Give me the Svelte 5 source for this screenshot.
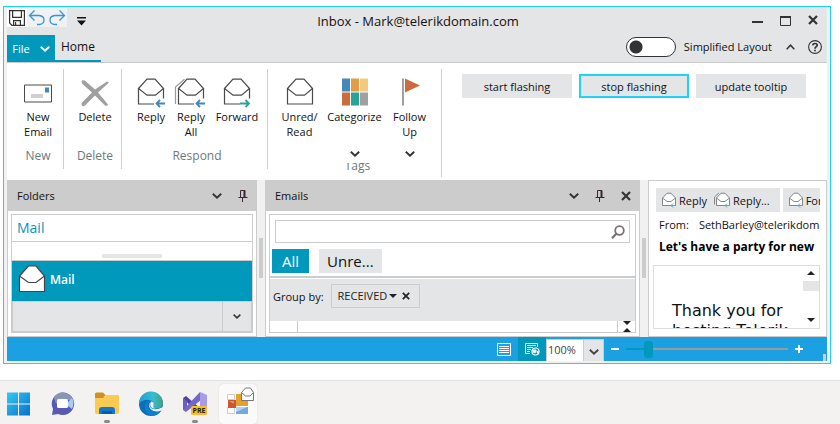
<script>
  let simplified = $state(false);
  let zoom = $state('100%');
  let level = $state(12);
  let search = $state('');
</script>

{#snippet envelope(kind)}
  <svg class="ico" viewBox="0 0 28 30" width="28" height="30" fill="none" stroke="#4a4a4c" stroke-width="1.2">
    {#if kind === 'all'}
      <path d="M-1.5 25.5V8.5L7.5.8" stroke="#9a9a9a" />
    {/if}
    <path d="M1.5 10L10 .7H18L26.5 10L18.5 16.6H10Z" />
    {#if kind === 'open'}
      <path d="M1.5 10V25.5H26.5V10" />
    {:else}
      <path d="M1.5 10V25.5H17M26.5 10V20" />
    {/if}
    {#if kind === 'reply' || kind === 'all'}
      <path d="M28 25H19.5M23 21.5L19.5 25L23 28.5" stroke="#4488bb" stroke-width="1.8" />
    {:else if kind === 'forward'}
      <path d="M17 25H26M22.5 21.5L26 25L22.5 28.5" stroke="#27a398" stroke-width="1.8" />
    {/if}
  </svg>
{/snippet}

{#snippet smallEnvelope(twin)}
  <svg class="ico" viewBox="0 0 17 16" width="17" height="16" fill="#fff" stroke="#858585">
    {#if twin}<path d="M.5 12.5V5L5 .8" fill="none" />{/if}
    <path d="M2.5 6L7 1.2H11L15.5 6V13.5H2.5Z" />
    <path d="M2.5 6L7 9.5H11L15.5 6" />
    <path d="M16 13.5H11M13 11.5L11 13.5L13 15.5" stroke="#4fa8c8" fill="none" />
  </svg>
{/snippet}

{#snippet chevron(w)}
  <svg class="ico" viewBox="0 0 10 6" width={w} height={w * 0.6} fill="none" stroke="currentColor" stroke-width="1.9"><path d="M.8 .8L5 4.8L9.2 .8" /></svg>
{/snippet}

{#snippet pin()}
  <svg class="ico" viewBox="0 0 10 12" width="10" height="12" fill="none" stroke="#3a2535"><path d="M2.5 7V.5H7M.5 7.5H9.5M4.5 7.5V12" /><path d="M6.5 .5V7" stroke-width="2" /></svg>
{/snippet}

{#snippet cross(size)}
  <svg class="ico" viewBox="0 0 10 10" width={size} height={size} fill="none" stroke="currentColor" stroke-width="2.2"><path d="M1 1L9 9M9 1L1 9" /></svg>
{/snippet}

<div class="desktop">
  <section class="window">
    <header class="titlebar">
      <div class="quick">
        <button aria-label="Save"><svg viewBox="0 0 20 20" width="20" height="20" fill="none" stroke="#333" stroke-width="1.2"><path d="M2.6 2.6H17.4V17.4H5L2.6 15ZM5.6 2.6V9.4H14.4V2.6M6.6 17V12.6H13.4V17M8.6 14V17" /></svg></button>
        <button class="tint" aria-label="Undo"><svg viewBox="0 0 20 20" width="20" height="20" fill="none" stroke="#3a96d2" stroke-width="1.3"><path d="M7.500 2.500L2.500 7.500L7.500 12.500M2.500 7.500H12Q17 8 17 12Q17 16 12.500 16.500H10" /></svg></button>
        <button class="tint" aria-label="Redo"><svg viewBox="0 0 20 20" width="20" height="20" fill="none" stroke="#3a96d2" stroke-width="1.3"><path d="M12.500 2.500L17.500 7.500L12.500 12.500M17.500 7.500H8Q3 8 3 12Q3 16 7.500 16.500H10" /></svg></button>
        <button class="more" aria-label="Customize quick access"><svg viewBox="0 0 9 9" width="9" height="9"><path d="M0 0H9V1.500H0ZM0 3.500H9L4.500 8.500Z" fill="#111" /></svg></button>
      </div>
      <h1>Inbox - Mark@telerikdomain.com</h1>
      <div class="winbtns">
        <button aria-label="Minimize"><svg viewBox="0 0 11 11" width="11" height="11"><path d="M0 6H11V8H0Z" fill="#333" /></svg></button>
        <button aria-label="Maximize"><svg viewBox="0 0 11 11" width="11" height="11" fill="none" stroke="#333"><path d="M.5 1.500H10.500V10.500H.5Z" /><path d="M0 2H11" stroke-width="2" /></svg></button>
        <button aria-label="Close">{@render cross(10)}</button>
      </div>
    </header>

    <nav class="tabs">
      <button class="file">File {@render chevron(10)}</button>
      <button class="home">Home</button>
      <div class="tabtools">
        <label><input type="checkbox" role="switch" bind:checked={simplified} /><span>Simplified Layout</span></label>
        <button class="collapse" aria-label="Collapse ribbon"><svg viewBox="0 0 9 6" width="9" height="6" fill="none" stroke="#333" stroke-width="1.5"><path d="M.7 5.200L4.500 1.200L8.300 5.200" /></svg></button>
        <button aria-label="Help"><svg viewBox="0 0 14 14" width="14" height="14" fill="none" stroke="#333"><circle cx="7" cy="7" r="6.400" stroke-width="1.100" /><path d="M4.800 5.400Q4.900 3.500 7 3.500Q9.200 3.500 9.200 5.300Q9.200 6.300 7.900 7Q7 7.500 7 8.700M7 9.700V11.200" stroke-width="1.700" /></svg></button>
      </div>
    </nav>

    <div class="ribbon">
      <div class="group new">
        <div class="cmds">
          <button class="cmd"><svg class="ico" viewBox="0 0 28 30" width="28" height="30"><path d="M.5 6.500H27.500V23.500H.5Z" fill="#fff" stroke="#4a4a4c" /><path d="M21 9H25V14H21Z" fill="#4488bb" /><path d="M7 16.500H19M7 18.500H19" stroke="#a0a0a0" /></svg>New<br />Email</button>
        </div>
        <p>New</p>
      </div>
      <div class="group delete">
        <div class="cmds">
          <button class="cmd"><svg class="ico" viewBox="0 0 28 30" width="28" height="30"><path d="M1 2Q3 1 5 3L14 11L26 3Q28 3 27.500 4.500L17 14L27 26Q27 28 24 27L14 17L4 27Q1 29 .5 26Q.5 24 3 22L11 14L1 5Q0 3 1 2Z" fill="#a0a0a0" /></svg>Delete</button>
        </div>
        <p>Delete</p>
      </div>
      <div class="group respond">
        <div class="cmds">
          <button class="cmd">{@render envelope('reply')}Reply</button>
          <button class="cmd">{@render envelope('all')}Reply<br />All</button>
          <button class="cmd wide">{@render envelope('forward')}Forward</button>
        </div>
        <p>Respond</p>
      </div>
      <div class="group tags">
        <div class="cmds">
          <button class="cmd">{@render envelope('open')}Unred/<br />Read</button>
          <button class="cmd"><svg class="ico" viewBox="0 0 28 30" width="28" height="30"><path d="M1 0H9V13H1Z" fill="#4488bb" /><path d="M10 0H18V13H10Z" fill="#e29c44" /><path d="M19 0H27V13H19Z" fill="#f2c97d" /><path d="M1 14H9V27H1Z" fill="#ca6c3d" /><path d="M10 14H18V27H10Z" fill="#27a398" /><path d="M19 14H27V27H19Z" fill="#a0a0a0" /></svg>Categorize<span class="drop">{@render chevron(10)}</span></button>
          <button class="cmd"><svg class="ico" viewBox="0 0 28 30" width="28" height="30"><path d="M6 0H8V27H6Z" fill="#a0a0a0" /><path d="M9 0L24 7L9 14Z" fill="#ca6c3d" /></svg>Follow<br />Up<span class="drop">{@render chevron(10)}</span></button>
        </div>
        <p class="cut"><span>Tags</span></p>
      </div>
      <div class="tests">
        <button>start flashing</button>
        <button class="focus">stop flashing</button>
        <button>update tooltip</button>
      </div>
    </div>

    <main>
      <section class="panel folders">
        <header><h2>Folders</h2><button aria-label="Folders menu">{@render chevron(10)}</button><button aria-label="Pin Folders">{@render pin()}</button></header>
        <div class="box">
          <h3>Mail</h3>
          <div class="grip"><i></i></div>
          <button class="mail"><svg class="ico" viewBox="0 0 28 28" width="28" height="28" fill="#fff" stroke="#454547" stroke-width="1.200"><path d="M1.500 11L10.500 1H18L26.500 11V26.500H1.500Z" /><path d="M1.500 11L10.500 17.500H18L26.500 11" fill="none" /></svg>Mail</button>
          <div class="overflow"><button aria-label="More folders">{@render chevron(8)}</button></div>
        </div>
      </section>
      <div class="splitter"><i></i></div>
      <section class="panel emails">
        <header><h2>Emails</h2><button aria-label="Emails menu">{@render chevron(10)}</button><button aria-label="Pin Emails">{@render pin()}</button><button aria-label="Close Emails">{@render cross(10)}</button></header>
        <div class="box">
          <div class="search"><input type="text" aria-label="Search emails" bind:value={search} /><svg viewBox="0 0 14 14" width="14" height="14" fill="none" stroke="#7b7074" stroke-width="1.800"><circle cx="8.500" cy="5.500" r="4.300" /><path d="M5.500 8.500L1 13.200" stroke-width="2.200" /></svg></div>
          <div class="filters"><button class="on">All</button><button>Unre...</button></div>
          <div class="grouping"><span>Group by:</span>
            <div class="chip"><button>RECEIVED<svg viewBox="0 0 8 4" width="8" height="4"><path d="M0 0H8L4 4Z" fill="#222" /></svg></button><button aria-label="Remove grouping">{@render cross(8)}</button></div>
          </div>
          <div class="grid"><i></i><span><svg viewBox="0 0 8 11" width="8" height="11"><path d="M0 0H8L4 4ZM4 7L8 11H0Z" fill="#222" /></svg></span></div>
        </div>
      </section>
      <div class="splitter"><i></i></div>
      <article class="reader">
        <div class="actions">
          <div><button>{@render smallEnvelope(false)}Reply</button><button>{@render smallEnvelope(true)}Reply...</button></div>
          <div><button>{@render smallEnvelope(false)}Forward</button></div>
        </div>
        <div class="from"><span>From:</span><span>SethBarley@telerikdomain.com</span></div>
        <h2>Let's have a party for new</h2>
        <div class="message">
          <p>Thank you for<br />hosting Telerik</p>
          <div class="scroll">
            <svg viewBox="0 0 8 4" width="8" height="4"><path d="M0 4H8L4 0Z" fill="#222" /></svg>
            <i></i>
            <svg viewBox="0 0 8 4" width="8" height="4"><path d="M0 0H8L4 4Z" fill="#222" /></svg>
          </div>
        </div>
      </article>
    </main>

    <footer>
      <button class="view" aria-label="Normal view"><svg viewBox="0 0 14 13" width="14" height="13" fill="none" stroke="#fff"><path d="M.5 .5H13.500V12.500H.5ZM2 3.500H12M2 5.500H12M2 7.500H12M2 9.500H12" /></svg></button>
      <button class="view on" aria-label="Web view"><svg viewBox="0 0 15 14" width="15" height="14" fill="none" stroke="#fff"><path d="M12.500 5V1.500H.5V11.500H5M2 3.500H11M2 5.500H8M2 7.500H6M2 9.500H5" /><circle cx="10.500" cy="9.500" r="3.500" stroke-width="1.200" /><path d="M8 8H11V10L9 11ZM12 11H13V9Z" fill="#fff" /></svg></button>
      <label class="pct"><select aria-label="Zoom" bind:value={zoom}><option>100%</option><option>150%</option></select><span>{@render chevron(10)}</span></label>
      <button class="step" aria-label="Zoom out"><svg viewBox="0 0 8 8" width="8" height="8"><path d="M0 3H8V5H0Z" fill="#fff" /></svg></button>
      <input class="slide" type="range" aria-label="Zoom level" min="0" max="100" bind:value={level} style:--at="{level}%" />
      <button class="step" aria-label="Zoom in"><svg viewBox="0 0 8 8" width="8" height="8"><path d="M0 3H3V0H5V3H8V5H5V8H3V5H0Z" fill="#fff" /></svg></button>
      <i class="sizer"></i>
    </footer>
  </section>

  <nav class="taskbar">
    <button aria-label="Start"><svg viewBox="0 0 24 24" width="24" height="24"><defs><linearGradient id="win" x1="0" y1="0" x2="1" y2="1"><stop offset="0" stop-color="#35c8f4" /><stop offset="1" stop-color="#0672cb" /></linearGradient></defs><path d="M0 .5H11V11.500H0ZM12 .5H23V11.500H12ZM0 12.500H11V23.500H0ZM12 12.500H23V23.500H12Z" fill="url(#win)" /></svg></button>
    <button aria-label="Chat"><svg viewBox="0 0 24 24" width="24" height="24"><path d="M12 .5A11.300 11.300 0 1 1 7 22L1 23L2 17A11.300 11.300 0 0 1 12 .5Z" fill="#5759b4" /><path d="M3 5Q11-3.500 20 4L22 8H8L5 12Z" fill="#8795b8" /><path d="M17 10L21 6Q24 11 21 17L17 14Z" fill="#a9cdf0" /><rect x="6" y="7" width="11" height="9" rx="1.500" fill="#fff" /></svg></button>
    <button class="running" aria-label="File Explorer"><svg viewBox="0 0 24 24" width="24" height="24"><path d="M0 2Q0 .5 1.500 .5H8L11 3.500H10L8 7H0Z" fill="#cf8f25" /><path d="M0 6H8L11 3H22.500Q24 3 24 4.500V20.500Q24 22 22.500 22H1.500Q0 22 0 20.500Z" fill="#fbca52" /><path d="M4 22V18Q4 15 7 15H17Q20 15 20 18V22Z" fill="#1478c8" /><path d="M7 19H17V22H7Z" fill="#0b5aa5" /></svg></button>
    <button aria-label="Edge"><svg viewBox="0 0 24 24" width="24" height="24"><defs><linearGradient id="edge" x1="0" y1="0" x2="1" y2="0"><stop offset="0" stop-color="#239fd6" /><stop offset=".6" stop-color="#35bfd0" /><stop offset="1" stop-color="#4c9a7e" /></linearGradient></defs><circle cx="12" cy="12" r="12" fill="#0e6fb8" /><path d="M0 12A12 12 0 0 1 24 11Q24 16 18 16.500Q13.500 16.500 14.500 13Q15 9 10 8Q4 7 0 12Z" fill="url(#edge)" /><path d="M11 9Q7 13 10 17Q14 21 21 18L22.500 18.500Q19 23.500 13 24Q5 21 6 14Q7 9 11 9Z" fill="#0b80cf" /><path d="M12 9.500Q9 13 12 16Q16 19 24 15L22.500 18.500Q15 21 11.500 17Q8 13 12 9.500Z" fill="#f3f3f3" /><path d="M12 9.500Q15.500 10 14.500 13Q13.500 16 17 16.700Q13 17 11.500 14.500Q10.500 12 12 9.500Z" fill="#f3f3f3" /></svg></button>
    <button class="running" aria-label="Visual Studio Preview"><svg viewBox="0 0 24 24" width="24" height="24"><path d="M0 6L3 4L18 17V23L16 23Z" fill="#4d43a0" /><path d="M0 6L4 9V16L0 18Z" fill="#6a5cc0" /><path d="M0 18L17 0L18 8L3 20Z" fill="#7468c6" /><path d="M17 0L24 3V20L17 23Z" fill="#a79ce6" /><rect x="8" y="14" width="16" height="9" rx="1.500" fill="#fcbb2a" /><text x="16" y="21" text-anchor="middle" font-size="7" font-weight="700" fill="#222">PRE</text></svg></button>
    <button class="active" aria-label="Telerik mail"><svg viewBox="0 0 38 38" width="38" height="38"><path d="M8.500 9.500H15.500V14.500H8.500ZM8.500 22.500H15.500V28.500H8.500Z" fill="#fafafa" stroke="#ccc" /><path d="M17 9H29V21H17Z" fill="#e5a02e" /><path d="M9 15H17V23H9Z" fill="#c9582b" /><path d="M10 16H15V19Z" fill="#e88d5e" /><path d="M17 22H29V29H17Z" fill="#72a8e4" /><path d="M17 22H28L17 27Z" fill="#b5d4f3" /><path d="M22.500 7.500L26.500 3H31.500L34.500 7.500V15.500H22.500Z" fill="#fff" stroke="#777" /><path d="M22.500 7.500L26.500 11H31L34.500 7.500" fill="none" stroke="#777" /></svg></button>
  </nav>
</div>

<style>
  :global(body) { margin: 0; background: #fff; }
  .desktop { font-family: "Open Sans", "Noto Sans", sans-serif; font-size: 11px; line-height: 15px; color: #111; padding-top: 6px; }
  .desktop * { box-sizing: border-box; }
  button, input, select { font: inherit; color: inherit; margin: 0; }
  button { border: 0; padding: 0; background: none; display: flex; align-items: center; justify-content: center; white-space: nowrap; }
  h1, h2, h3, p { margin: 0; font-weight: 400; }
  svg { display: block; flex: none; overflow: visible; }
  i { display: block; }

  .window { margin: 0 9px 0 3px; border: 1px solid #1bd3f5; background: #f1f1f1; padding: 0 3px; padding-bottom: 2px; }
  .titlebar { display: flex; background: #e4e5e7; height: 28px; }
  .quick { display: flex; align-items: center; height: 21px; }
  .quick button { width: 20px; height: 19px; background: #fff; }
  .quick .tint { background: #eff1f3; }
  .quick .more { background: none; width: 29px; padding-top: 8px; }
  h1 { flex: 1; text-align: center; font-size: 13px; line-height: 28px; margin-right: 6px; }
  .winbtns { display: flex; gap: 6px; align-items: center; height: 26px; padding-right: 3px; color: #333; }
  .winbtns button { width: 22px; height: 22px; }

  .tabs { display: flex; background: #e4e5e7; border-bottom: 1px solid #c9cacc; height: 28px; }
  .file { background: #0099bc; color: #fff; width: 48px; gap: 10px; }
  .home { font-size: 12px; padding: 0 6px 2px; border-bottom: 2px solid #0099bc; }
  .tabtools { margin-left: auto; display: flex; align-items: center; padding: 0 5px 4px 0; }
  .tabtools label { display: flex; align-items: center; gap: 8px; }
  .tabtools input { appearance: none; width: 50px; height: 20px; border: 1px solid #333; border-radius: 10px; background: radial-gradient(circle at 9px 9px, #333 6px, #fff 7px); }
  .tabtools input:checked { background: radial-gradient(circle at 39px 9px, #333 6px, #fff 7px); }
  .collapse { margin: 0 13px 0 14px; }

  .ribbon { background: #fff; display: flex; padding: 6px 0 3px; }
  .group { border-right: 1px solid #cfcfd1; height: 100px; padding-top: 9px; display: flex; flex-direction: column; align-items: center; }
  .group.new { width: 57px; padding-left: 6px; }
  .group.delete { width: 58px; padding-left: 5px; }
  .group.respond { width: 146px; padding-left: 5px; }
  .group.tags { width: 174px; height: 108px; }
  .cmds { display: flex; height: 69px; }
  .cmd { display: block; align-self: flex-start; width: 40px; text-align: center; }
  .cmd.wide { width: 52px; }
  .cmd .ico { margin: 0 auto; height: 31px; }
  .tags .cmds { height: 85px; gap: 1px; }
  .tags .cmd { width: 54px; height: 82px; display: flex; flex-direction: column; justify-content: flex-start; }
  .tags .cmd .ico { margin: 0; }
  .drop { margin-top: auto; padding-bottom: 3px; color: #333; }
  .tags .cmd .drop .ico { height: 6px; }
  .group p { font-size: 12px; line-height: 18px; color: #6c797c; }
  .group .cut { height: 10px; overflow: hidden; display: flex; align-items: flex-end; line-height: 14px; padding-left: 6px; }
  .tests { display: flex; gap: 7px; padding: 5px 0 0 20px; flex: 1; }
  .tests button { width: 110px; height: 24px; background: #e4e5e7; }
  .tests .focus { border: 2px solid #1bd3fb; }

  main { display: flex; background: #fff; }
  .panel { border: 1px solid #ccc; border-top: 0; display: flex; flex-direction: column; }
  .folders { flex: 0 0 250px; }
  .emails { flex: 1; min-width: 0; }
  .panel header { background: #ccc; height: 31px; display: flex; align-items: center; padding: 0 3px 0 9px; gap: 6px; color: #333; }
  .panel h2 { flex: 1; color: #111; font-size: 11px; line-height: 15px; }
  .panel header button { width: 20px; height: 20px; }
  .box { margin: 3px; border: 1px solid #ccc; flex: 1; display: flex; flex-direction: column; }
  h3 { font-size: 14px; line-height: 26px; padding-left: 5px; color: #0099bc; border-bottom: 1px solid #ccc; }
  .grip { height: 19px; border-bottom: 1px solid #ccc; padding-top: 12px; }
  .grip i { width: 60px; height: 4px; background: #e4e5e7; margin: auto; }
  .mail { background: #0099bc; color: #fff; font-weight: 600; font-size: 12px; height: 40px; justify-content: flex-start; padding: 0 0 4px 6px; gap: 4px; }
  .overflow { flex: 1; border: 1px solid #ccc; background: #e4e5e7; display: flex; justify-content: flex-end; color: #333; }
  .overflow button { width: 29px; border-left: 1px solid #ccc; }
  .splitter { width: 8px; background: #f1f1f1; flex: none; padding: 58px 2px 0; }
  .splitter i { width: 4px; height: 40px; background: #ccc; }

  .search { margin: 5px; border: 1px solid #ccc; display: flex; align-items: center; height: 23px; padding-right: 4px; }
  .search input { flex: 1; min-width: 0; border: 0; outline: 0; background: none; }
  .filters { display: flex; gap: 10px; padding: 1px 2px 3px; border-bottom: 2px solid #ccc; font-size: 15px; }
  .filters button { height: 24px; padding: 0 8px; background: #e4e5e7; }
  .filters .on { background: #0099bc; color: #fff; padding: 0 10px; }
  .grouping { display: flex; align-items: flex-start; gap: 7px; background: #e4e5e7; height: 42px; margin-top: 1px; padding: 5px 3px 0; line-height: 26px; }
  .chip { display: flex; border: 1px solid #ccc; height: 24px; padding: 0 9px 0 6px; gap: 5px; color: #222; }
  .chip button:first-child { gap: 2px; }
  .grid { flex: 1; display: flex; justify-content: space-between; overflow: hidden; }
  .grid i { width: 28px; border-right: 1px solid #ccc; }
  .grid span { width: 18px; border-left: 1px solid #ccc; padding-left: 5px; }

  .reader { flex: 0 0 179px; border: 1px solid #ccc; padding: 7px 6px 5px 7px; display: flex; flex-direction: column; overflow: hidden; }
  .actions { display: flex; gap: 3px; overflow: hidden; }
  .actions div { display: flex; background: #e4e5e7; height: 24px; padding: 0 10px 0 4px; gap: 7px; flex: none; }
  .actions button { gap: 2px; }
  .from { display: flex; gap: 10px; padding: 5px 0 0 3px; overflow: hidden; white-space: nowrap; }
  .reader h2 { font-size: 12px; font-weight: 700; padding: 7px 0 10px 3px; line-height: 16px; white-space: nowrap; color: #000; }
  .message { border: 1px solid #ddd; display: flex; height: 64px; overflow: hidden; margin-left: -3px; }
  .message p { flex: 1; font-family: "DejaVu Sans", sans-serif; font-size: 16px; line-height: 20px; padding: 35px 0 0 18px; white-space: nowrap; min-width: 0; }
  .scroll { width: 16px; display: flex; flex-direction: column; align-items: center; padding: 5px 0 6px; }
  .scroll i { width: 16px; height: 10px; background: #e4e5e7; margin: 6px 0 auto; }

  footer { background: #1ba1e2; height: 24px; display: flex; justify-content: flex-end; align-items: center; position: relative; padding-right: 17px; }
  .view { width: 28px; height: 24px; }
  .view.on { background: #0099bc; }
  .pct { display: flex; align-self: stretch; border: 1px solid #ccc; border-bottom: 0; margin-top: 2px; background: #fff; width: 58px; color: #444; }
  .pct select { appearance: none; border: 0; background: none; padding: 0 0 2px 1px; flex: 1; min-width: 0; }
  .pct span { width: 20px; background: #e4e5e7; border-left: 1px solid #ccc; display: flex; align-items: center; justify-content: center; padding-top: 3px; }
  .step { width: 22px; height: 24px; }
  .slide { appearance: none; width: 162px; height: 18px; background: linear-gradient(90deg, #0099bc var(--at), #9a9a9a var(--at)) center / 100% 2px no-repeat; }
  .slide::-webkit-slider-thumb { appearance: none; width: 9px; height: 17px; border-radius: 3px; background: #0099bc; }
  .sizer { position: absolute; right: 1px; bottom: 0; width: 3px; height: 7px; background: #ccc; }

  .taskbar { background: #f3f2f1; border-top: 1px solid #e0e0e0; height: 45px; margin-top: 16px; display: flex; padding-top: 3px; }
  .taskbar button { width: 44px; height: 40px; position: relative; }
  .taskbar button:first-child { width: 41px; padding-right: 3px; }
  .taskbar .running::after { content: ""; position: absolute; bottom: 1px; left: 19px; width: 6px; height: 3px; border-radius: 2px; background: #8a8a8a; }
  .taskbar .active { width: 38px; background: #fafafa; border-radius: 4px; box-shadow: 0 0 1px #bbb; margin-left: 2px; }
</style>
